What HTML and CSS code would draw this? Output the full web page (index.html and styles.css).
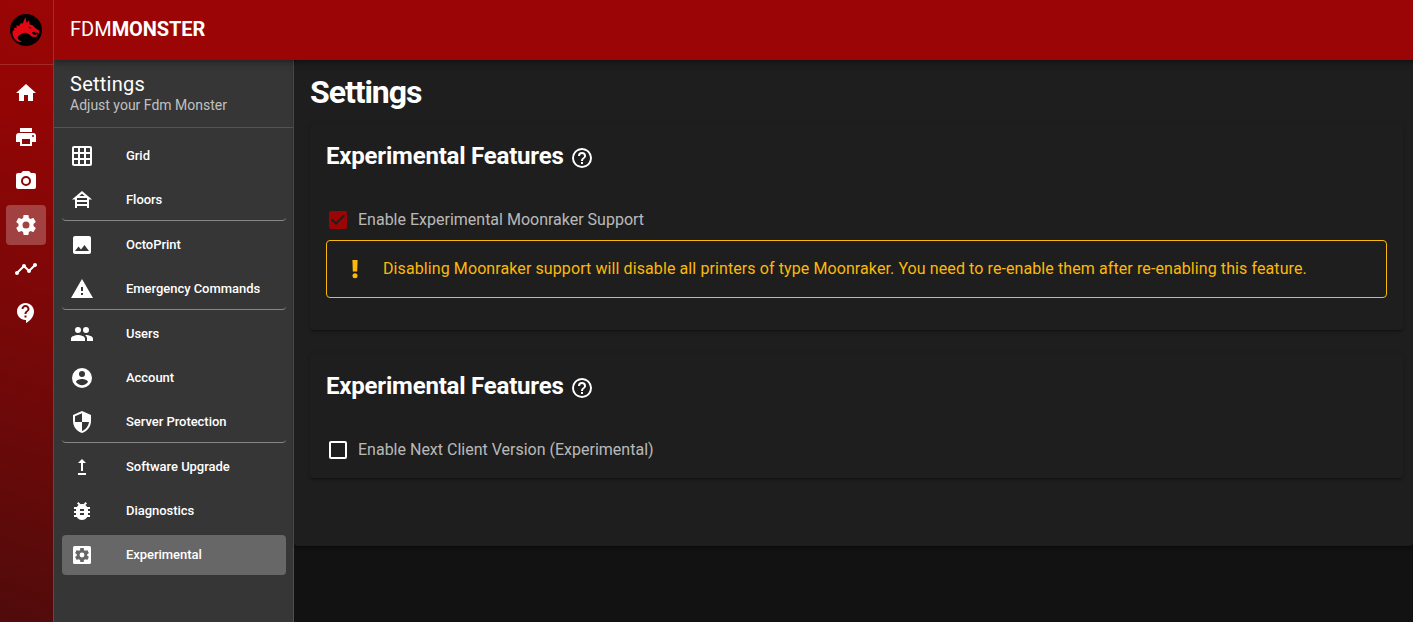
FILE: index.html
```html
<!DOCTYPE html>
<html lang="en">
<head>
<meta charset="utf-8">
<title>FDM Monster</title>
<link rel="stylesheet" href="styles.css">
</head>
<body>
<svg class="defs" aria-hidden="true">
  <symbol id="cog" viewBox="0 0 24 24"><path d="M12,15.5A3.5,3.5 0 0,1 8.5,12A3.5,3.5 0 0,1 12,8.5A3.5,3.5 0 0,1 15.5,12A3.5,3.5 0 0,1 12,15.5M19.43,12.97C19.47,12.65 19.5,12.33 19.5,12C19.5,11.67 19.47,11.34 19.43,11L21.54,9.37C21.73,9.22 21.78,8.95 21.66,8.73L19.66,5.27C19.54,5.05 19.27,4.96 19.05,5.05L16.56,6.05C16.04,5.66 15.5,5.32 14.87,5.07L14.5,2.42C14.46,2.18 14.25,2 14,2H10C9.75,2 9.54,2.18 9.5,2.42L9.13,5.07C8.5,5.32 7.96,5.66 7.44,6.05L4.95,5.05C4.73,4.96 4.46,5.05 4.34,5.27L2.34,8.73C2.21,8.95 2.27,9.22 2.46,9.37L4.57,11C4.53,11.34 4.5,11.67 4.5,12C4.5,12.33 4.53,12.65 4.57,12.97L2.46,14.63C2.27,14.78 2.21,15.05 2.34,15.27L4.34,18.73C4.46,18.95 4.73,19.03 4.95,18.95L7.44,17.94C7.96,18.34 8.5,18.68 9.13,18.93L9.5,21.58C9.54,21.82 9.75,22 10,22H14C14.25,22 14.46,21.82 14.5,21.58L14.87,18.93C15.5,18.67 16.04,18.34 16.56,17.94L19.05,18.95C19.27,19.03 19.54,18.95 19.66,18.73L21.66,15.27C21.78,15.05 21.73,14.78 21.54,14.63L19.43,12.97Z"/></symbol>
  <symbol id="help" viewBox="0 0 24 24"><path d="M11,18H13V16H11V18M12,2A10,10 0 0,0 2,12A10,10 0 0,0 12,22A10,10 0 0,0 22,12A10,10 0 0,0 12,2M12,20C7.59,20 4,16.41 4,12C4,7.59 7.59,4 12,4C16.41,4 20,7.59 20,12C20,16.41 16.41,20 12,20M12,6A4,4 0 0,0 8,10H10A2,2 0 0,1 12,8A2,2 0 0,1 14,10C14,12 11,11.75 11,15H13C13,12.75 16,12.5 16,10A4,4 0 0,0 12,6Z"/></symbol>
</svg>
<div class="app">
  <nav class="rail">
    <div class="logo">
      <svg viewBox="0 0 96 96"><circle cx="48" cy="48" r="48" fill="#000"/><path fill="#e30613" d="M22 82C10 73 6 62 8 50L13 49L12 42L20 41L19 34L27 36L33 27L38 29L46 9L50 26L57 19L58 31L68 34L77 43L88 50L86 60L81 54L78 59L74 53L66 55L68 60L76 63L82 59L79 69L66 68L56 60L46 56C36 57 25 63 23 72C25 78 30 81 36 83C31 85 26 84 22 82Z"/><path fill="#000" d="M56 38L65 43L58 43Z"/></svg>
    </div>
    <div class="rail-items">
      <a class="rail-item"><svg class="icon" viewBox="0 0 24 24"><path d="M10,20V14H14V20H19V12H22L12,3L2,12H5V20H10Z"/></svg></a>
      <a class="rail-item"><svg class="icon" viewBox="0 0 24 24"><path d="M18,3H6V7H18M19,12A1,1 0 0,1 18,11A1,1 0 0,1 19,10A1,1 0 0,1 20,11A1,1 0 0,1 19,12M16,19H8V14H16M19,8H5A3,3 0 0,0 2,11V17H6V21H18V17H22V11A3,3 0 0,0 19,8Z"/></svg></a>
      <a class="rail-item"><svg class="icon" viewBox="0 0 24 24"><path d="M4,4H7L9,2H15L17,4H20A2,2 0 0,1 22,6V18A2,2 0 0,1 20,20H4A2,2 0 0,1 2,18V6A2,2 0 0,1 4,4M12,7A5,5 0 0,0 7,12A5,5 0 0,0 12,17A5,5 0 0,0 17,12A5,5 0 0,0 12,7M12,9A3,3 0 0,1 15,12A3,3 0 0,1 12,15A3,3 0 0,1 9,12A3,3 0 0,1 12,9Z"/></svg></a>
      <a class="rail-item active"><svg class="icon"><use href="#cog"/></svg></a>
      <a class="rail-item"><svg class="icon" viewBox="0 0 24 24"><path d="M23 8c0 1.1-.9 2-2 2-.18 0-.35-.02-.51-.07l-3.56 3.55c.05.16.07.34.07.52 0 1.1-.9 2-2 2s-2-.9-2-2c0-.18.02-.36.07-.52l-2.55-2.55c-.16.05-.34.07-.52.07s-.36-.02-.52-.07l-4.55 4.56c.05.16.07.33.07.51 0 1.1-.9 2-2 2s-2-.9-2-2 .9-2 2-2c.18 0 .35.02.51.07l4.56-4.55C8.02 9.36 8 9.18 8 9c0-1.1.9-2 2-2s2 .9 2 2c0 .18-.02.36-.07.52l2.55 2.55c.16-.05.34-.07.52-.07s.36.02.52.07l3.55-3.56C19.02 8.35 19 8.18 19 8c0-1.1.9-2 2-2s2 .9 2 2z"/></svg></a>
      <a class="rail-item"><svg class="icon" viewBox="0 0 24 24"><path d="M11.5 2C6.81 2 3 5.81 3 10.5S6.81 19 11.5 19h.5v3c4.86-2.34 8-7 8-11.5C20 5.81 16.19 2 11.5 2zm1 14.5h-2v-2h2v2zm0-3.5h-2c0-3.25 3-3 3-5 0-1.1-.9-2-2-2s-2 .9-2 2h-2c0-2.21 1.79-4 4-4s4 1.79 4 4c0 2.5-3 2.75-3 5z"/></svg></a>
    </div>
  </nav>
  <div class="body">
    <header class="topbar"><span>FDM</span><strong>MONSTER</strong></header>
    <div class="content">
      <aside class="drawer">
        <div class="drawer-head">
          <div class="drawer-title">Settings</div>
          <div class="drawer-sub">Adjust your Fdm Monster</div>
        </div>
        <div class="menu">
          <a class="item"><svg class="icon" viewBox="0 0 24 24"><path d="M10,4V8H14V4H10M16,4V8H20V4H16M16,10V14H20V10H16M16,16V20H20V16H16M14,20V16H10V20H14M8,20V16H4V20H8M8,14V10H4V14H8M8,8V4H4V8H8M10,14H14V10H10V14M4,2H20A2,2 0 0,1 22,4V20A2,2 0 0,1 20,22H4C2.92,22 2,21.1 2,20V4A2,2 0 0,1 4,2Z"/></svg><span>Grid</span></a>
          <a class="item last"><svg class="icon" viewBox="0 0 24 24"><path fill-rule="evenodd" d="M12 3L22 11.5H19V20H17V18H7V20H5V11.5H2L12 3M12 5.7L9.3 8H14.7L12 5.7M7 10V12H17V10H7M7 14V16H17V14H7Z"/></svg><span>Floors</span></a>
          <a class="item"><svg class="icon" viewBox="0 0 24 24"><path d="M8.5,13.5L11,16.5L14.5,12L19,18H5M21,19V5C21,3.89 20.1,3 19,3H5A2,2 0 0,0 3,5V19A2,2 0 0,0 5,21H19A2,2 0 0,0 21,19Z"/></svg><span>OctoPrint</span></a>
          <a class="item last"><svg class="icon" viewBox="0 0 24 24"><path d="M13,14H11V10H13M13,18H11V16H13M1,21H23L12,2L1,21Z"/></svg><span>Emergency Commands</span></a>
          <a class="item"><svg class="icon" viewBox="0 0 24 24"><path d="M16,13C15.71,13 15.38,13 15.03,13.05C16.19,13.89 17,15 17,16.5V19H23V16.5C23,14.17 18.33,13 16,13M8,13C5.67,13 1,14.17 1,16.5V19H15V16.5C15,14.17 10.33,13 8,13M8,11A3,3 0 0,0 11,8A3,3 0 0,0 8,5A3,3 0 0,0 5,8A3,3 0 0,0 8,11M16,11A3,3 0 0,0 19,8A3,3 0 0,0 16,5A3,3 0 0,0 13,8A3,3 0 0,0 16,11Z"/></svg><span>Users</span></a>
          <a class="item"><svg class="icon" viewBox="0 0 24 24"><path d="M12,19.2C9.5,19.2 7.29,17.92 6,16C6.03,14 10,12.9 12,12.9C14,12.9 17.97,14 18,16C16.71,17.92 14.5,19.2 12,19.2M12,5A3,3 0 0,1 15,8A3,3 0 0,1 12,11A3,3 0 0,1 9,8A3,3 0 0,1 12,5M12,2A10,10 0 0,0 2,12A10,10 0 0,0 12,22A10,10 0 0,0 22,12A10,10 0 0,0 12,2Z"/></svg><span>Account</span></a>
          <a class="item last"><svg class="icon" viewBox="0 0 24 24"><path d="M12,12H19C18.47,16.11 15.72,19.78 12,20.92V12H5V6.3L12,3.19M12,1L3,5V11C3,16.55 6.84,21.73 12,23C17.16,21.73 21,16.55 21,11V5L12,1Z"/></svg><span>Server Protection</span></a>
          <a class="item"><svg class="icon" viewBox="0 0 24 24"><path d="M16,18v2H8v-2H16zM11,7.99V16h2V7.99h3L12,4L8,7.99H11z"/></svg><span>Software Upgrade</span></a>
          <a class="item"><svg class="icon" viewBox="0 0 24 24"><path d="M14,12H10V10H14M14,16H10V14H14M20,8H17.19C16.74,7.22 16.12,6.55 15.37,6.04L17,4.41L15.59,3L13.42,5.17C12.96,5.06 12.5,5 12,5C11.5,5 11.04,5.06 10.59,5.17L8.41,3L7,4.41L8.62,6.04C7.88,6.55 7.26,7.22 6.81,8H4V10H6.09C6.04,10.33 6,10.66 6,11V12H4V14H6V15C6,15.34 6.04,15.67 6.09,16H4V18H6.81C7.85,19.79 9.78,21 12,21C14.22,21 16.15,19.79 17.19,18H20V16H17.91C17.96,15.67 18,15.34 18,15V14H20V12H18V11C18,10.66 17.96,10.33 17.91,10H20V8Z"/></svg><span>Diagnostics</span></a>
          <a class="item active"><svg class="icon" viewBox="0 0 24 24"><rect x="3" y="3" width="18" height="18" rx="1.6"/><use class="cutout" href="#cog" x="3.6" y="3.6" width="16.8" height="16.8"/></svg><span>Experimental</span></a>
        </div>
      </aside>
      <main class="main">
        <section class="sheet">
          <h1>Settings</h1>
          <div class="card">
            <h2><span>Experimental Features</span><svg class="icon"><use href="#help"/></svg></h2>
            <label class="check"><svg class="icon checked" viewBox="0 0 24 24"><path d="M10,17L5,12L6.41,10.58L10,14.17L17.59,6.58L19,8M19,3H5C3.89,3 3,3.89 3,5V19A2,2 0 0,0 5,21H19C20.1,21 21,20.1 21,19V5C21,3.89 20.1,3 19,3Z"/></svg><span>Enable Experimental Moonraker Support</span></label>
            <div class="alert"><svg class="icon" viewBox="0 0 24 24"><path d="M9.4 3H14.6L14.2 14.6H9.8Z"/><circle cx="12" cy="18.8" r="2.5"/></svg><span>Disabling Moonraker support will disable all printers of type Moonraker. You need to re-enable them after re-enabling this feature.</span></div>
          </div>
          <div class="card card-short">
            <h2><span>Experimental Features</span><svg class="icon"><use href="#help"/></svg></h2>
            <label class="check"><svg class="icon" viewBox="0 0 24 24"><path d="M19,3H5C3.89,3 3,3.89 3,5V19A2,2 0 0,0 5,21H19A2,2 0 0,0 21,19V5C21,3.89 20.1,3 19,3M19,5V19H5V5H19Z"/></svg><span>Enable Next Client Version (Experimental)</span></label>
          </div>
        </section>
      </main>
    </div>
  </div>
</div>
</body>
</html>
```
FILE: styles.css
```css
* { box-sizing: border-box; }
body { margin: 0; background: #121212; color: #fff; font-family: Roboto, sans-serif; }
.defs { display: none; }
.app { display: flex; height: 622px; overflow: hidden; }
.icon { width: 24px; height: 24px; fill: currentColor; flex: none; display: block; }

.rail { position: relative; z-index: 2; width: 54px; flex: none; border-right: 1px solid #98302f; background: linear-gradient(200deg, #9b0505 0%, #930505 18%, #780808 54%, #500b0b 100%); }
.logo { height: 65px; padding: 14px 0 0 10px; border-bottom: 1px solid rgba(255, 255, 255, 0.14); }
.logo svg { width: 32px; height: 32px; display: block; }
.rail-items { display: flex; flex-direction: column; gap: 4px; padding: 8px 6px; }
.rail-item { width: 40px; height: 40px; border-radius: 4px; display: flex; align-items: center; justify-content: center; }
.rail-item.active { background: rgba(255, 255, 255, 0.24); }

.body { flex: 1; min-width: 0; display: flex; flex-direction: column; }
.topbar { position: relative; z-index: 1; height: 60px; flex: none; display: flex; align-items: center; padding: 0 16px 3px; background: #9b0505; font-size: 20px; box-shadow: 0 2px 4px -1px rgba(0,0,0,.2), 0 4px 5px rgba(0,0,0,.14), 0 1px 10px rgba(0,0,0,.12); }
.topbar strong { letter-spacing: -.1px; }
.content { flex: 1; display: flex; min-height: 0; }

.drawer { width: 240px; flex: none; background: #363636; border-right: 1px solid #4f4f4f; }
.drawer-head { height: 68px; padding: 12px 16px 0; border-bottom: 1px solid #545454; }
.drawer-title { font-size: 20px; line-height: 24px; letter-spacing: .25px; }
.drawer-sub { font-size: 14px; line-height: 19px; color: rgba(255, 255, 255, 0.7); }
.menu { padding: 8px 7px 8px 8px; display: flex; flex-direction: column; gap: 4px; }
.item { height: 40px; display: flex; align-items: center; gap: 32px; padding: 0 8px; border-radius: 4px; font-size: 13px; font-weight: 500; letter-spacing: -.04px; }
.item span { padding-bottom: 1px; }
.item.last { height: 41px; border-bottom: 1px solid #868686; }
.item.active { background: #676767; }
.cutout { fill: #676767; }

.main { flex: 1; min-width: 0; }
.sheet { height: 486px; padding: 12px 10px 0 16px; background: #1e1e1e; border-radius: 4px; box-shadow: 0 3px 1px -2px rgba(0,0,0,.2), 0 2px 2px rgba(0,0,0,.14), 0 1px 5px rgba(0,0,0,.12); }
h1 { margin: 0 0 12px; font-size: 32px; line-height: 40px; letter-spacing: -1.05px; }
.card { height: 206px; margin-bottom: 24px; padding: 16px; border-radius: 4px; box-shadow: 0 3px 1px -2px rgba(0,0,0,.2), 0 2px 2px rgba(0,0,0,.14), 0 1px 5px rgba(0,0,0,.12); }
.card-short { height: 124px; }
h2 { display: flex; align-items: center; gap: 6px; margin: 0; font-size: 24px; line-height: 32px; letter-spacing: -.21px; }
h2 .icon { margin-top: 4px; }
.check { display: flex; align-items: center; gap: 8px; height: 24px; margin-top: 36px; font-size: 16px; color: rgba(255, 255, 255, 0.7); }
.check span, .alert span { padding-bottom: 2px; }
.check .icon { color: #fff; }
.check .icon.checked { color: #9b0505; }
.alert { display: flex; align-items: center; gap: 16px; height: 58px; margin-top: 8px; padding: 0 16px; border: 1px solid #fbb90b; border-radius: 4px; color: #fbb90b; font-size: 16px; letter-spacing: .095px; }
```
